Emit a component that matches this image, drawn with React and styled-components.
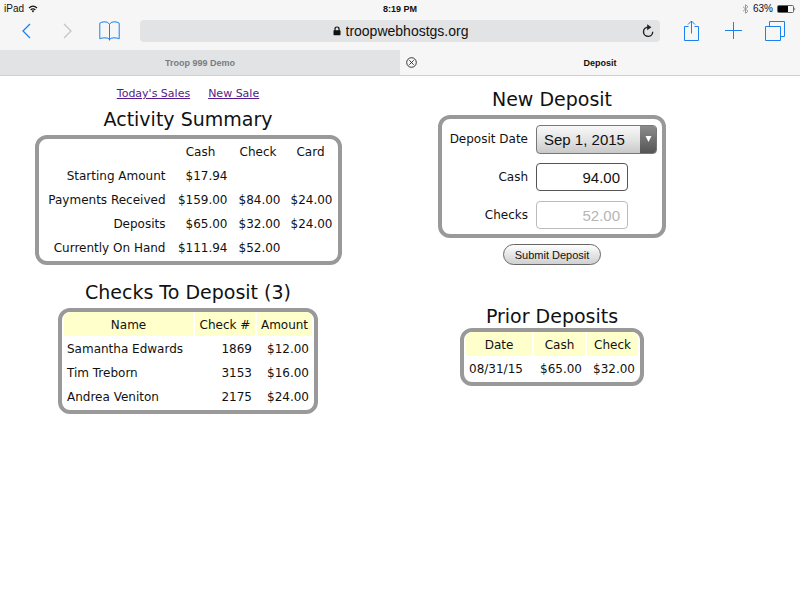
import React, { useState } from 'react';
import styled, { createGlobalStyle } from 'styled-components';

const GlobalStyle = createGlobalStyle`
    * {
        box-sizing: border-box;
    }
    body {
        margin: 0;
        background: #fff;
        color: #111;
        font-family: "DejaVu Sans", Verdana, sans-serif;
        font-size: 12px;
    }
    button, input, select {
        font-family: "Liberation Sans", Arial, sans-serif;
        color: inherit;
    }
`;

const Browser = styled.header`
    background: #f6f6f6;
    border-bottom: 1px solid #cfd0d1;
    font-family: "Liberation Sans", Arial, sans-serif;
    color: #111;
`;

const StatusBar = styled.div`
    display: grid;
    grid-template-columns: 1fr auto 1fr;
    align-items: center;
    height: 17px;
    padding: 0 4px;
    font-size: 10px;
`;

const StatusGroup = styled.div`
    display: flex;
    align-items: center;
    justify-content: ${(props) => props.$end ? 'flex-end' : 'flex-start'};
    gap: 4px;
`;

const Clock = styled.strong`
    font-size: 9px;
`;

const Toolbar = styled.div`
    display: grid;
    grid-template-columns: 130px 1fr 126px;
    align-items: center;
    gap: 10px;
    height: 33px;
    padding: 0 4px 6px 0;
`;

const ToolGroup = styled.div`
    display: grid;
    grid-template-columns: repeat(3, 1fr);
    padding-left: ${(props) => props.$inset || 0}px;
`;

const IconButton = styled.button`
    display: flex;
    align-items: center;
    justify-content: center;
    border: 0;
    padding: 0;
    background: none;
    color: #1a82f0;

    &:disabled {
        color: #c4c5c7;
    }
`;

const DarkIconButton = styled(IconButton)`
    color: #222;
`;

const AddressBar = styled.div`
    display: grid;
    grid-template-columns: 24px 1fr 24px;
    align-items: center;
    height: 22px;
    border-radius: 4px;
    background: #e2e3e5;
`;

const Address = styled.label`
    grid-column: 2;
    display: flex;
    align-items: center;
    justify-content: center;
    gap: 5px;
`;

const AddressInput = styled.input`
    width: 122px;
    height: 20px;
    padding: 0;
    border: 0;
    background: none;
    font-size: 14px;
`;

const Tabs = styled.nav`
    display: grid;
    grid-template-columns: 1fr 1fr;
`;

const Tab = styled.div`
    display: grid;
    grid-template-columns: 22px 1fr 22px;
    height: 25px;
    background: ${(props) => props.$active ? '#f6f6f6' : '#e2e3e5'};
    color: ${(props) => props.$active ? '#111' : '#7b7c7e'};
`;

const TabTitle = styled.button`
    grid-column: 2;
    border: 0;
    padding: 0;
    background: none;
    font-size: 9px;
    font-weight: bold;
`;

const Page = styled.main`
    display: grid;
    grid-template-columns: 47% 44%;
    padding-top: 11px;
`;

const Column = styled.div`
    display: flex;
    flex-direction: column;
    align-items: center;
`;

const Links = styled.nav`
    display: flex;
    gap: 18px;
    height: 20px;
    font-size: 11px;
    line-height: 14px;
`;

const Link = styled.a`
    color: #551a8b;
`;

const Section = styled.section`
    display: flex;
    flex-direction: column;
    align-items: center;
    margin-top: ${(props) => props.$top || 0}px;
`;

const Title = styled.h2`
    margin: 0 0 ${(props) => props.$tight ? 0 : 4}px;
    font-size: 19px;
    font-weight: normal;
    line-height: 24px;
`;

const Panel = styled.div`
    border: 4px solid #999;
    border-radius: 12px;
    padding-bottom: 2px;
`;

const Table = styled.table`
    table-layout: fixed;
    width: ${(props) => props.$width}px;
    border-spacing: 2px 0;
`;

const Head = styled.th`
    width: ${(props) => props.$width}px;
    height: 24px;
    padding: 2px 0 0;
    font-weight: normal;
    white-space: nowrap;
    background: ${(props) => props.$tinted ? '#ffc' : 'none'};
    border-radius: ${(props) => props.$corner || '0'};
`;

const Cell = styled.td`
    height: 24px;
    padding: 2px 3px 0;
    text-align: ${(props) => props.$left ? 'left' : 'right'};
    white-space: nowrap;
`;

const Form = styled.form`
    display: flex;
    flex-direction: column;
    align-items: center;
    gap: 6px;
`;

const Fields = styled(Panel)`
    display: grid;
    grid-template-columns: 86px 121px;
    grid-auto-rows: 38px;
    align-items: center;
    column-gap: 8px;
    padding: 1px 5px 0 0;
`;

const FieldLabel = styled.label`
    text-align: right;
    white-space: nowrap;
`;

const SelectWrap = styled.div`
    display: grid;
    grid-template-columns: 1fr 16px;
    height: 29px;
    overflow: hidden;
    border: 1px solid #777;
    border-radius: 4px;
    background: linear-gradient(#f8f8f8, #e4e4e4 50%, #c9c9c9);
`;

const Select = styled.select`
    appearance: none;
    grid-area: 1 / 1 / 2 / 3;
    border: 0;
    padding: 0 7px;
    background: none;
    font-size: 15px;
`;

const SelectArrow = styled.span`
    grid-area: 1 / 2 / 2 / 3;
    display: flex;
    align-items: center;
    justify-content: center;
    background: linear-gradient(#8b8b8b, #555);
    pointer-events: none;
`;

const AmountInput = styled.input`
    width: 92px;
    height: 28px;
    border: 1px solid #555;
    border-radius: 4px;
    padding: 0 7px;
    background: #fff;
    font-size: 15px;
    text-align: right;

    &:disabled {
        border-color: #bbb;
        color: #b5b5b5;
    }
`;

const SubmitButton = styled.button`
    height: 21px;
    padding: 0 11px;
    border: 1px solid #666;
    border-radius: 11px;
    background: linear-gradient(#fff, #e6e6e6 50%, #d0d0d0);
    font-size: 11px;
`;

const activity = [
    ['Starting Amount', '$17.94', '', ''],
    ['Payments Received', '$159.00', '$84.00', '$24.00'],
    ['Deposits', '$65.00', '$32.00', '$24.00'],
    ['Currently On Hand', '$111.94', '$52.00', ''],
];

const checks = [
    ['Samantha Edwards', '1869', '$12.00'],
    ['Tim Treborn', '3153', '$16.00'],
    ['Andrea Veniton', '2175', '$24.00'],
];

const deposits = [['08/31/15', '$65.00', '$32.00']];

const DataTable = ({ width, columns, rows, tinted, leftFirst }) => {
    const corner = (i) => {
        if (i === 0) return '6px 0 0 0';
        return i === columns.length - 1 ? '0 6px 0 0' : '0';
    };

    return (
        <Panel>
            <Table $width={width}>
                <thead>
                    <tr>
                        {columns.map(([name, size], i) => (
                            <Head key={i} $width={size} $tinted={tinted} $corner={corner(i)}>{name}</Head>
                        ))}
                    </tr>
                </thead>
                <tbody>
                    {rows.map((row) => (
                        <tr key={row[0]}>
                            {row.map((value, i) => (
                                <Cell key={i} $left={leftFirst && i === 0}>{value}</Cell>
                            ))}
                        </tr>
                    ))}
                </tbody>
            </Table>
        </Panel>
    );
};

const Line = ({ width, height, stroke = 1, children }) => (
    <svg width={width} height={height} viewBox={`0 0 ${width} ${height}`} fill="none" stroke="currentColor" strokeWidth={stroke} aria-hidden="true">
        {children}
    </svg>
);

const BrowserChrome = () => {
    const [url, setUrl] = useState('troopwebhostgs.org');

    return (
        <Browser>
            <StatusBar>
                <StatusGroup>
                    <span>iPad</span>
                    <Line width={10} height={8} stroke={1.2}>
                        <path d="M1 3Q5-.6 9 3" />
                        <path d="M2.6 4.8Q5 2.8 7.4 4.8" />
                        <path d="M3.6 5.8L5 7.4L6.4 5.8Q5 4.8 3.6 5.8Z" fill="currentColor" stroke="none" />
                    </Line>
                </StatusGroup>
                <Clock>8:19 PM</Clock>
                <StatusGroup $end>
                    <svg width="7" height="10" viewBox="0 0 7 10" fill="none" stroke="#999" aria-hidden="true">
                        <path d="M1 2.7L6 7.2L3.5 9.4V.6L6 2.8L1 7.3" />
                    </svg>
                    <span>63%</span>
                    <svg width="19" height="8" viewBox="0 0 19 8" aria-hidden="true">
                        <rect x=".5" y=".5" width="16" height="7" rx="1" fill="none" stroke="#666" />
                        <rect x="1" y="1" width="10" height="6" fill="#000" />
                        <path d="M17.5 2.5Q19 4 17.5 5.5Z" fill="#333" />
                    </svg>
                </StatusGroup>
            </StatusBar>
            <Toolbar>
                <ToolGroup $inset={6}>
                    <IconButton aria-label="Back">
                        <Line width={9} height={16} stroke={1.3}><path d="M8 1L1 8L8 15" /></Line>
                    </IconButton>
                    <IconButton aria-label="Forward" disabled>
                        <Line width={9} height={16} stroke={1.3}><path d="M1 1L8 8L1 15" /></Line>
                    </IconButton>
                    <IconButton aria-label="Bookmarks">
                        <Line width={21} height={20}>
                            <path d="M10.5 3.5Q9.5.8 6 .8Q2.5.8.8 2.2V17.8Q2.5 16.8 6 16.8Q9.5 16.8 10.5 18.5Q11.5 16.8 15 16.8Q18.5 16.8 20.2 17.8V2.2Q18.5.8 15 .8Q11.5.8 10.5 3.5V19.5" />
                        </Line>
                    </IconButton>
                </ToolGroup>
                <AddressBar>
                    <Address>
                        <svg width="8" height="10" viewBox="0 0 8 10" aria-hidden="true">
                            <path d="M2 5V3Q2 1 4 1T6 3V5" fill="none" stroke="#111" strokeWidth="1.2" />
                            <rect x=".5" y="4.2" width="7" height="5" rx=".6" fill="#111" />
                        </svg>
                        <AddressInput aria-label="Address" value={url} onChange={(e) => setUrl(e.target.value)} />
                    </Address>
                    <DarkIconButton aria-label="Reload">
                        <Line width={12} height={14} stroke={1.4}>
                            <path d="M7 3.2H6A4.6 4.6 0 1 0 10.7 7.8" />
                            <path d="M5.2.2L9.4 3.2L5.2 6.2Z" fill="currentColor" stroke="none" />
                        </Line>
                    </DarkIconButton>
                </AddressBar>
                <ToolGroup>
                    <IconButton aria-label="Share">
                        <Line width={17} height={22}>
                            <path d="M5.5 6.5H1.5V20.5H15.5V6.5H11.5M8.5 13.5V1M5 4.5L8.5 1L12 4.5" />
                        </Line>
                    </IconButton>
                    <IconButton aria-label="New tab">
                        <Line width={17} height={17}><path d="M8.5 0V17M0 8.5H17" /></Line>
                    </IconButton>
                    <IconButton aria-label="Show tabs">
                        <Line width={20} height={20}><path d="M.5 5.5H15.5V19.5H.5ZM4.5 5.5V.5H19.5V15.5H15.5" /></Line>
                    </IconButton>
                </ToolGroup>
            </Toolbar>
            <Tabs>
                <Tab>
                    <TabTitle>Troop 999 Demo</TabTitle>
                </Tab>
                <Tab $active>
                    <DarkIconButton aria-label="Close tab">
                        <Line width={11} height={11} stroke={0.9}>
                            <circle cx="5.5" cy="5.5" r="4.8" />
                            <path d="M3.3 3.3L7.7 7.7M7.7 3.3L3.3 7.7" />
                        </Line>
                    </DarkIconButton>
                    <TabTitle>Deposit</TabTitle>
                </Tab>
            </Tabs>
        </Browser>
    );
};

const DepositForm = () => {
    const [cash, setCash] = useState('94.00');

    return (
        <Form onSubmit={(e) => e.preventDefault()}>
            <Fields>
                <FieldLabel htmlFor="date">Deposit Date</FieldLabel>
                <SelectWrap>
                    <Select id="date">
                        <option>Sep 1, 2015</option>
                    </Select>
                    <SelectArrow>
                        <svg width="7" height="7" viewBox="0 0 7 7" aria-hidden="true">
                            <path d="M.5 0H6.5L3.5 6Z" fill="#fff" />
                        </svg>
                    </SelectArrow>
                </SelectWrap>
                <FieldLabel htmlFor="cash">Cash</FieldLabel>
                <AmountInput id="cash" value={cash} onChange={(e) => setCash(e.target.value)} />
                <FieldLabel htmlFor="checks">Checks</FieldLabel>
                <AmountInput id="checks" value="52.00" disabled />
            </Fields>
            <SubmitButton type="submit">Submit Deposit</SubmitButton>
        </Form>
    );
};

const App = () => {
    return (
        <>
            <GlobalStyle />
            <BrowserChrome />
            <Page>
                <Column>
                    <Links>
                        <Link href="#sales">Today's Sales</Link>
                        <Link href="#new">New Sale</Link>
                    </Links>
                    <Section>
                        <Title>Activity Summary</Title>
                        <DataTable
                            width={299}
                            columns={[['', 128], ['Cash', 60], ['Check', 51], ['Card', 50]]}
                            rows={activity}
                        />
                    </Section>
                    <Section $top={15}>
                        <Title>Checks To Deposit (3)</Title>
                        <DataTable
                            width={252}
                            columns={[['Name', 129], ['Check #', 60], ['Amount', 55]]}
                            rows={checks}
                            tinted
                            leftFirst
                        />
                    </Section>
                </Column>
                <Column>
                    <Section>
                        <Title>New Deposit</Title>
                        <DepositForm />
                    </Section>
                    <Section $top={39}>
                        <Title $tight>Prior Deposits</Title>
                        <DataTable
                            width={176}
                            columns={[['Date', 66], ['Cash', 51], ['Check', 51]]}
                            rows={deposits}
                            tinted
                            leftFirst
                        />
                    </Section>
                </Column>
            </Page>
        </>
    );
};

export default App;
